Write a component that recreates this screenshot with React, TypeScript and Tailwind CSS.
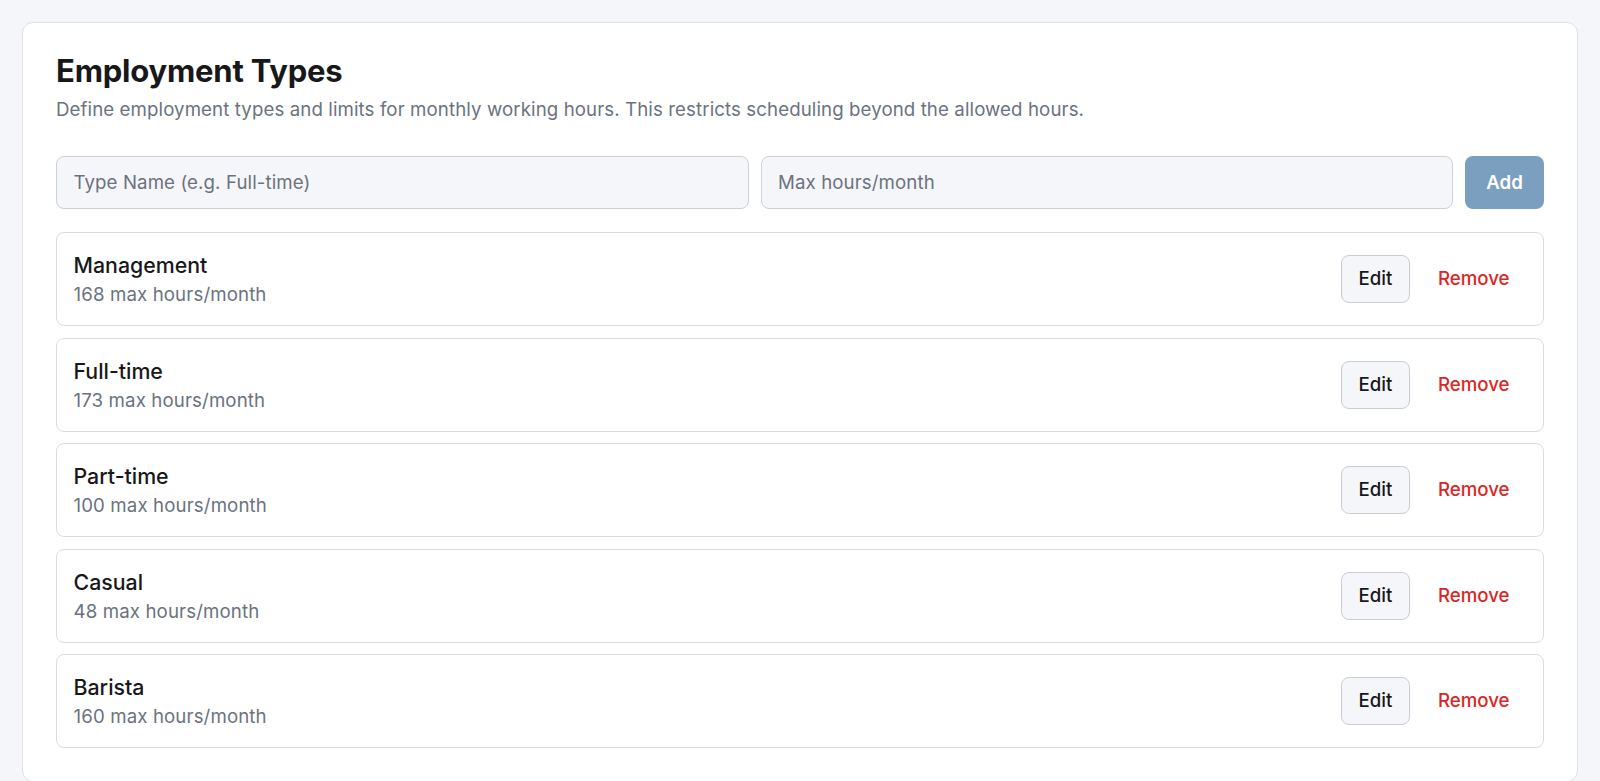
import React from "react";

const types = [
  { name: "Management", hours: 168 },
  { name: "Full-time", hours: 173 },
  { name: "Part-time", hours: 100 },
  { name: "Casual", hours: 48 },
  { name: "Barista", hours: 160 },
];

export default function App() {
  return (
    <div
      className="min-h-[781px] bg-[#f5f6f9] px-[22px] pt-[22px]"
      style={{ fontFamily: "Inter, 'Noto Sans', sans-serif" }}
    >
      <div className="rounded-[11px] border border-[#dfe1e6] bg-white px-[33px] pt-[33px] pb-[33px]">
        <h1 className="text-[31px] leading-[30px] font-bold text-[#18181b] tracking-[-0.2px]">
          Employment Types
        </h1>
        <p className="mt-[10px] text-[18.67px] leading-[28px] tracking-[0.1px] text-[#6b7280]">
          Define employment types and limits for monthly working hours. This restricts scheduling beyond the allowed hours.
        </p>

        <div className="mt-[32px] flex gap-[12px]">
          <input
            className="h-[53.33px] flex-1 rounded-[8px] border border-[#cdd0d6] bg-[#f5f6f9] px-[16.5px] text-[18.67px] tracking-[0.1px] text-[#18181b] placeholder:text-[#6b7280] outline-none"
            placeholder="Type Name (e.g. Full-time)"
          />
          <input
            className="h-[53.33px] flex-1 rounded-[8px] border border-[#cdd0d6] bg-[#f5f6f9] px-[16.5px] text-[18.67px] tracking-[0.1px] text-[#18181b] placeholder:text-[#6b7280] outline-none"
            placeholder="Max hours/month"
          />
          <button className="h-[53.33px] w-[79px] rounded-[8px] bg-[#7ba0bf] text-[18.67px] font-semibold text-white">
            Add
          </button>
        </div>

        <div className="mt-[23px] flex flex-col gap-[11.5px]">
          {types.map((t) => (
            <div
              key={t.name}
              className="flex items-center justify-between rounded-[8px] border border-[#d9dce1] bg-white py-[16px] pl-[16.5px] pr-[16px]"
            >
              <div>
                <div className="text-[21.33px] leading-[32px] font-medium text-[#18181b]">
                  {t.name}
                </div>
                <div className="text-[18.67px] leading-[28px] tracking-[0.12px] text-[#6b7280]">
                  {t.hours} max hours/month
                </div>
              </div>
              <div className="flex items-center gap-[10px]">
                <button className="h-[48px] rounded-[8px] border border-[#c9ccd2] bg-[#f5f6f9] px-[17px] text-[18.67px] font-medium text-[#18181b]">
                  Edit
                </button>
                <button className="h-[48px] rounded-[8px] border border-transparent px-[16.5px] text-[18.67px] font-medium text-[#dc2626]">
                  Remove
                </button>
              </div>
            </div>
          ))}
        </div>
      </div>
    </div>
  );
}
